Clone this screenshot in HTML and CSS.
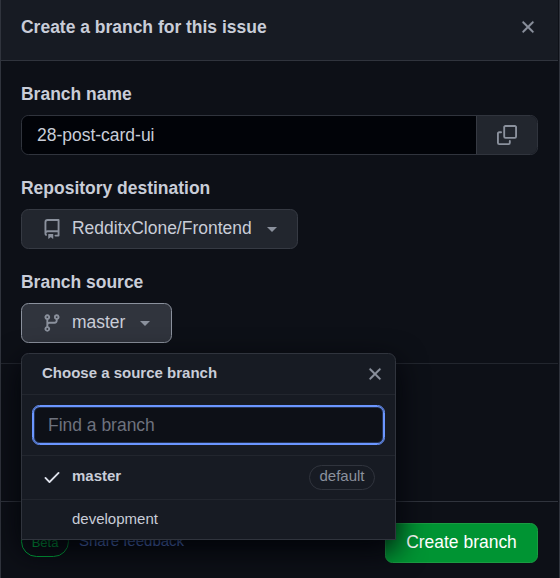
FILE: index.html
```
<!DOCTYPE html>
<html lang="en">
<head>
<meta charset="utf-8">
<title>Create a branch</title>
<link rel="stylesheet" href="styles.css">
</head>
<body>
<main class="dialog">
  <header class="dialog-header">
    <h1 class="title">Create a branch for this issue</h1>
    <svg class="icon close" viewBox="0 0 16 16"><path d="M3.72 3.72a.75.75 0 0 1 1.06 0L8 6.94l3.22-3.22a.75.75 0 1 1 1.06 1.06L9.06 8l3.22 3.22a.75.75 0 1 1-1.06 1.06L8 9.06l-3.22 3.22a.75.75 0 0 1-1.06-1.06L6.94 8 3.72 4.78a.75.75 0 0 1 0-1.06Z"/></svg>
  </header>
  <section class="form">
    <div class="field">
      <h2 class="label">Branch name</h2>
      <div class="name-group">
        <div class="name-input">28-post-card-ui</div>
        <button class="copy"><svg class="icon" viewBox="0 0 16 16"><path d="M0 6.75C0 5.784.784 5 1.75 5h1.5a.75.75 0 0 1 0 1.5h-1.5a.25.25 0 0 0-.25.25v7.5c0 .138.112.25.25.25h7.5a.25.25 0 0 0 .25-.25v-1.5a.75.75 0 0 1 1.5 0v1.5A1.75 1.75 0 0 1 9.25 16h-7.5A1.75 1.75 0 0 1 0 14.25Z"/><path d="M5 1.75C5 .784 5.784 0 6.75 0h7.5C15.216 0 16 .784 16 1.75v7.5A1.75 1.75 0 0 1 14.25 11h-7.5A1.75 1.75 0 0 1 5 9.25Zm1.75-.25a.25.25 0 0 0-.25.25v7.5c0 .138.112.25.25.25h7.5a.25.25 0 0 0 .25-.25v-7.5a.25.25 0 0 0-.25-.25Z"/></svg></button>
      </div>
    </div>
    <div class="field">
      <h2 class="label">Repository destination</h2>
      <button class="select select-repo"><svg class="icon" viewBox="0 0 16 16"><path d="M2 2.5A2.5 2.5 0 0 1 4.5 0h8.75a.75.75 0 0 1 .75.75v12.5a.75.75 0 0 1-.75.75h-2.5a.75.75 0 0 1 0-1.5h1.75v-2h-8a1 1 0 0 0-.714 1.7.75.75 0 1 1-1.072 1.05A2.495 2.495 0 0 1 2 11.5Zm10.5-1h-8a1 1 0 0 0-1 1v6.708A2.486 2.486 0 0 1 4.5 9h8ZM5 12.25a.25.25 0 0 1 .25-.25h3.5a.25.25 0 0 1 .25.25v3.25a.25.25 0 0 1-.4.2l-1.45-1.087a.249.249 0 0 0-.3 0L5.4 15.7a.25.25 0 0 1-.4-.2Z"/></svg><span>RedditxClone/Frontend</span><i class="caret"></i></button>
    </div>
    <div class="field source">
      <h2 class="label">Branch source</h2>
      <button class="select select-branch"><svg class="icon" viewBox="0 0 16 16"><path d="M9.5 3.25a2.25 2.25 0 1 1 3 2.122V6A2.5 2.5 0 0 1 10 8.5H6a1 1 0 0 0-1 1v1.128a2.251 2.251 0 1 1-1.5 0V5.372a2.25 2.25 0 1 1 1.5 0v1.836A2.493 2.493 0 0 1 6 7h4a1 1 0 0 0 1-1v-.628A2.25 2.25 0 0 1 9.5 3.25Zm-6 0a.75.75 0 1 0 1.5 0 .75.75 0 0 0-1.5 0Zm8.25-.75a.75.75 0 1 0 0 1.5.75.75 0 0 0 0-1.5ZM4.25 12a.75.75 0 1 0 0 1.5.75.75 0 0 0 0-1.5Z"/></svg><span>master</span><i class="caret"></i></button>
      <div class="popover">
        <div class="popover-header">
          <h3 class="popover-title">Choose a source branch</h3>
          <svg class="icon close" viewBox="0 0 16 16"><path d="M3.72 3.72a.75.75 0 0 1 1.06 0L8 6.94l3.22-3.22a.75.75 0 1 1 1.06 1.06L9.06 8l3.22 3.22a.75.75 0 1 1-1.06 1.06L8 9.06l-3.22 3.22a.75.75 0 0 1-1.06-1.06L6.94 8 3.72 4.78a.75.75 0 0 1 0-1.06Z"/></svg>
        </div>
        <div class="filter"><input class="search" placeholder="Find a branch"></div>
        <div class="item item-selected"><svg class="icon check" viewBox="0 0 16 16"><path d="M13.78 4.22a.75.75 0 0 1 0 1.06l-7.25 7.25a.75.75 0 0 1-1.06 0L2.22 9.28a.75.75 0 0 1 1.06-1.06L6 10.94l6.72-6.72a.75.75 0 0 1 1.06 0Z"/></svg><span class="item-name">master</span><span class="tag">default</span></div>
        <div class="item item-plain"><span class="item-name">development</span></div>
      </div>
    </div>
  </section>
  <section class="next"></section>
  <footer class="dialog-footer">
    <div class="feedback"><span class="beta">Beta</span><a class="link">Share feedback</a></div>
    <button class="create">Create branch</button>
  </footer>
</main>
</body>
</html>
```
FILE: styles.css
```
* { box-sizing: border-box; }
body {
  margin: 0;
  background: #0d1017;
  color: #c9cdd8;
  font: 17.48px/26px "Liberation Sans", Arial, sans-serif;
  overflow: hidden;
}
h1, h2, h3 { margin: 0; font-size: inherit; font-weight: 700; }
button { font: inherit; color: inherit; }
.icon { display: block; flex: none; width: 20px; height: 20px; fill: #8b919d; }
.close { stroke: #8b919d; stroke-width: .25; }
.dialog {
  display: flex;
  flex-direction: column;
  height: 578px;
  padding-right: 1px;
  border: solid #30343d;
  border-width: 0 1px;
}
.dialog-header {
  display: flex;
  align-items: center;
  justify-content: space-between;
  height: 61px;
  padding: 0 20px 6px;
  background: #171b23;
  border-bottom: 1px solid #30343d;
}
.form {
  display: flex;
  flex-direction: column;
  gap: 20px;
  height: 303px;
  padding: 20px 20px 0;
  border-bottom: 1px solid #22262e;
}
.field { display: flex; flex-direction: column; align-items: flex-start; height: 74px; }
.label { height: 34px; }
.name-group { display: flex; width: 517px; height: 40px; border: 1px solid #30343d; border-radius: 7.5px; overflow: hidden; }
.name-input { flex: 1; padding: 6px 15px; background: #010308; }
.copy {
  display: flex;
  align-items: center;
  justify-content: center;
  width: 61px;
  padding: 0;
  border: 0;
  border-left: 1px solid #363a43;
  background: #22262e;
}
.select {
  display: flex;
  align-items: center;
  height: 40px;
  padding: 0 20px;
  border: 1px solid #363a43;
  border-radius: 7.5px;
  background: #22262e;
}
.select span { margin: 0 15px 2px 10px; }
.select-repo { width: 277px; }
.select-branch { width: 151px; border-color: #8b919d; background: #30343d; }
.caret { border: 5px solid transparent; border-top-color: #8b919d; border-bottom: 0; margin-top: 1px; }
.source { position: relative; }
.popover {
  position: absolute;
  z-index: 2;
  top: 84px;
  left: 0;
  width: 375px;
  height: 187px;
  background: #171b23;
  border: 1px solid #30343d;
  border-radius: 7.5px 7.5px 0 0;
  box-shadow: 0 10px 30px #010308;
  font-size: 15px;
}
.popover-header { display: flex; justify-content: space-between; align-items: center; height: 41px; padding: 0 10px 0 20px; border-bottom: 1px solid #22262e; }
.popover-title { padding-bottom: 2px; }
.filter { height: 61px; padding: 10px; border-bottom: 1px solid #22262e; }
.search {
  display: block;
  width: 353px;
  height: 40px;
  padding: 0 15px;
  border: 1px solid #6b96ff;
  border-radius: 7.5px;
  outline: 0;
  box-shadow: inset 0 0 0 1px #6b96ff, inset 0 0 0 2px #253453;
  background: #0d1017;
  color: #c9cdd8;
  font: 17.48px "Liberation Sans", Arial, sans-serif;
}
.search::placeholder { color: #6e727e; opacity: 1; }
.item { display: flex; align-items: center; padding: 0 20px; }
.item-selected { height: 44px; border-bottom: 1px solid #22262e; font-weight: 700; }
.item-selected .item-name { margin: 0 auto 3px 10px; }
.item-plain { height: 39px; padding-bottom: 2px; }
.item-plain .item-name { margin-left: 30px; }
.check { margin-bottom: 1px; fill: #dfe3ec; }
.tag { width: 66px; height: 25px; border: 1px solid #30343d; border-radius: 20px; color: #8b919d; font-weight: 400; line-height: 20px; text-align: center; }
.next { height: 137px; }
.dialog-footer { display: flex; align-items: center; justify-content: space-between; height: 77px; padding: 6px 20px 0; border-top: 1px solid #30343d; }
.feedback { display: flex; align-items: center; gap: 10px; margin-bottom: 4px; font-size: 15px; }
.beta { width: 48px; height: 31px; border: 1px solid #00b440; border-radius: 20px; color: #00c04a; font-size: 13px; line-height: 31px; text-align: center; }
.link { color: #6b96ff; }
.create { width: 153px; height: 40px; padding: 0 0 2px; border: 1px solid #1a9c42; border-radius: 7.5px; background: #009433; color: #fff; }
```
